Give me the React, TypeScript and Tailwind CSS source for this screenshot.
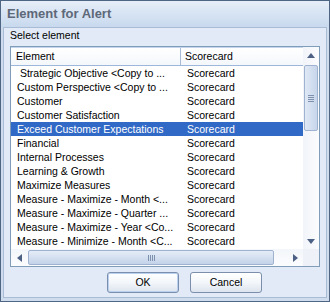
import React from 'react'

const rows: [string, string][] = [
  [' Strategic Objective <Copy to ...', 'Scorecard'],
  ['Custom Perspective <Copy to ...', 'Scorecard'],
  ['Customer', 'Scorecard'],
  ['Customer Satisfaction', 'Scorecard'],
  ['Exceed Customer Expectations', 'Scorecard'],
  ['Financial', 'Scorecard'],
  ['Internal Processes', 'Scorecard'],
  ['Learning & Growth', 'Scorecard'],
  ['Maximize Measures', 'Scorecard'],
  ['Measure - Maximize - Month <...', 'Scorecard'],
  ['Measure - Maximize - Quarter ...', 'Scorecard'],
  ['Measure - Maximize - Year <Co...', 'Scorecard'],
  ['Measure - Minimize - Month <C...', 'Scorecard'],
]

function Arrow({ dir }: { dir: 'up' | 'down' | 'left' | 'right' }) {
  const pts = {
    up: '0,5 4,0 8,5',
    down: '0,0 8,0 4,5',
    left: '5,0 5,8 0,4',
    right: '0,0 5,4 0,8',
  }[dir]
  const vertical = dir === 'up' || dir === 'down'
  return (
    <svg width={vertical ? 8 : 5} height={vertical ? 5 : 8} viewBox={vertical ? '0 0 8 5' : '0 0 5 8'}>
      <polygon points={pts} fill="#4d6185" />
    </svg>
  )
}

function Button({ label, focused }: { label: string; focused?: boolean }) {
  return (
    <button
      className={`w-[72px] h-[21px] rounded-[3px] border border-[#7b8eab] bg-gradient-to-b from-[#ffffff] via-[#f3f6fa] to-[#dde4ee] text-[10.5px] text-black ${
        focused ? 'shadow-[inset_0_0_0_1px_#b9d0f0]' : ''
      }`}
    >
      {label}
    </button>
  )
}

export default function App() {
  return (
    <div className="w-[330px] h-[302px] border border-[#4f6584] bg-[#cfdcee] flex flex-col font-['Liberation_Sans',Arial,sans-serif] text-[10.5px] text-black select-none">
      {/* title bar */}
      <div className="h-[26px] flex items-center pl-[6px] bg-gradient-to-b from-[#e6eef8] to-[#c8d9ee]">
        <span className="text-[13px] font-bold text-[#5d6879]">Element for Alert</span>
      </div>

      {/* body */}
      <div className="flex-1 mx-[2px] mb-[3px] border border-[#a8bcd6] bg-[#e1eaf6] flex flex-col pl-[6px] pr-[6px] pt-[1px] pb-[4px]">
        <div className="h-[13px] leading-[13px] mb-[4px]">Select element</div>

        {/* list */}
        <div className="w-[310px] h-[221px] border border-[#7f9db9] bg-white flex flex-col">
          <div className="flex h-[202px]">
            <div className="w-[292px] flex flex-col overflow-hidden">
              <div className="h-[19px] flex border-t border-[#c5d6ec] border-b border-b-[#9db7dc] bg-gradient-to-b from-[#ffffff] to-[#f4f7fb]">
                <div className="w-[170px] pl-[5px] leading-[17px] border-r border-[#a9bcd6]">Element</div>
                <div className="flex-1 pl-[4px] leading-[17px]">Scorecard</div>
              </div>
              <div className="flex flex-col">
                {rows.map(([name, type], i) => (
                  <div
                    key={i}
                    className={`h-[14px] leading-[14px] flex shrink-0 ${i === 4 ? 'bg-[#3169c6] text-white' : ''}`}
                  >
                    <div className="w-[170px] pl-[6px] whitespace-pre overflow-hidden">{name}</div>
                    <div className="flex-1 pl-[6px] whitespace-nowrap">{type}</div>
                  </div>
                ))}
              </div>
            </div>

            {/* vertical scrollbar */}
            <div className="w-[16px] flex flex-col bg-gradient-to-r from-[#f1f4f9] to-[#fbfcfe]">
              <div className="h-[16px] flex items-center justify-center">
                <Arrow dir="up" />
              </div>
              <div className="mt-[2px] mx-[1px] h-[66px] rounded-[2px] border border-[#9fb2cf] bg-gradient-to-r from-[#dfe8f5] to-[#c7d6eb] flex flex-col items-center justify-center gap-[1px]">
                <div className="w-[6px] h-[1px] bg-[#7d90ae]" />
                <div className="w-[6px] h-[1px] bg-[#7d90ae]" />
                <div className="w-[6px] h-[1px] bg-[#7d90ae]" />
                <div className="w-[6px] h-[1px] bg-[#7d90ae]" />
              </div>
              <div className="flex-1" />
              <div className="h-[16px] flex items-center justify-center">
                <Arrow dir="down" />
              </div>
            </div>
          </div>

          {/* horizontal scrollbar */}
          <div className="flex h-[17px]">
            <div className="w-[292px] flex items-center bg-gradient-to-b from-[#f3f6fa] to-[#fbfcfe]">
              <div className="w-[16px] h-full flex items-center justify-center">
                <Arrow dir="left" />
              </div>
              <div className="ml-[1px] w-[246px] h-[15px] rounded-[2px] border border-[#9fb2cf] bg-gradient-to-b from-[#e4ecf7] to-[#c4d3e9] flex items-center justify-center gap-[1px]">
                <div className="w-[1px] h-[6px] bg-[#7d90ae]" />
                <div className="w-[1px] h-[6px] bg-[#7d90ae]" />
                <div className="w-[1px] h-[6px] bg-[#7d90ae]" />
                <div className="w-[1px] h-[6px] bg-[#7d90ae]" />
              </div>
              <div className="flex-1" />
              <div className="w-[16px] h-full flex items-center justify-center">
                <Arrow dir="right" />
              </div>
            </div>
            <div className="w-[16px] bg-[#eef2f8]" />
          </div>
        </div>

        {/* buttons */}
        <div className="mt-[5px] ml-[97px] flex gap-[11px]">
          <Button label="OK" focused />
          <Button label="Cancel" />
        </div>
      </div>
    </div>
  )
}
